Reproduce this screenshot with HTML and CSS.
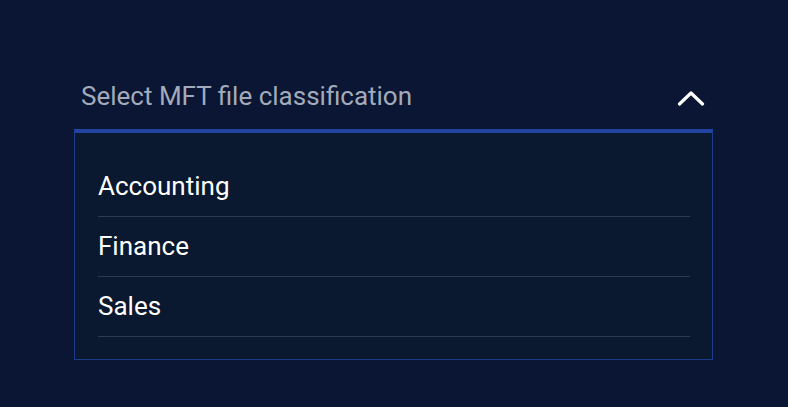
FILE: index.html
```html
<!DOCTYPE html>
<html>
<head>
<meta charset="utf-8">
<link rel="stylesheet" href="styles.css">
</head>
<body>
<div class="select">
  <div class="select-head">
    <span class="placeholder">Select MFT file classification</span>
    <svg class="chev" width="28" height="16" viewBox="0 0 28 16"><path d="M2.5 14 L14 3 L25.5 14" fill="none" stroke="#ffffff" stroke-width="3.2" stroke-linecap="round" stroke-linejoin="round"/></svg>
  </div>
  <div class="menu">
    <div class="item">Accounting</div>
    <div class="item">Finance</div>
    <div class="item">Sales</div>
  </div>
</div>
</body>
</html>
```
FILE: styles.css
```css
html, body {
  margin: 0;
  padding: 0;
  background: #0a1633;
  font-family: Roboto, "Liberation Sans", sans-serif;
}
body {
  padding: 72px 0 0 74px;
  height: 407px;
  box-sizing: border-box;
}
.select {
  width: 639px;
}
.select-head {
  display: flex;
  align-items: flex-start;
  justify-content: space-between;
  height: 57px;
  box-sizing: border-box;
  padding: 9px 7px 0 7px;
}
.placeholder {
  color: #a3abba;
  font-size: 26px;
  line-height: 30px;
}
.chev {
  display: block;
  margin-right: 1px;
  margin-top: 9px;
}
.menu {
  border: 1px solid #1d3c8c;
  border-top: 4px solid #2343a0;
  background: #0a1830;
  padding: 24px 22px 22px 23px;
}
.item {
  color: #ffffff;
  font-size: 26px;
  height: 59px;
  line-height: 59px;
  border-bottom: 1px solid #2b3a52;
}
```
